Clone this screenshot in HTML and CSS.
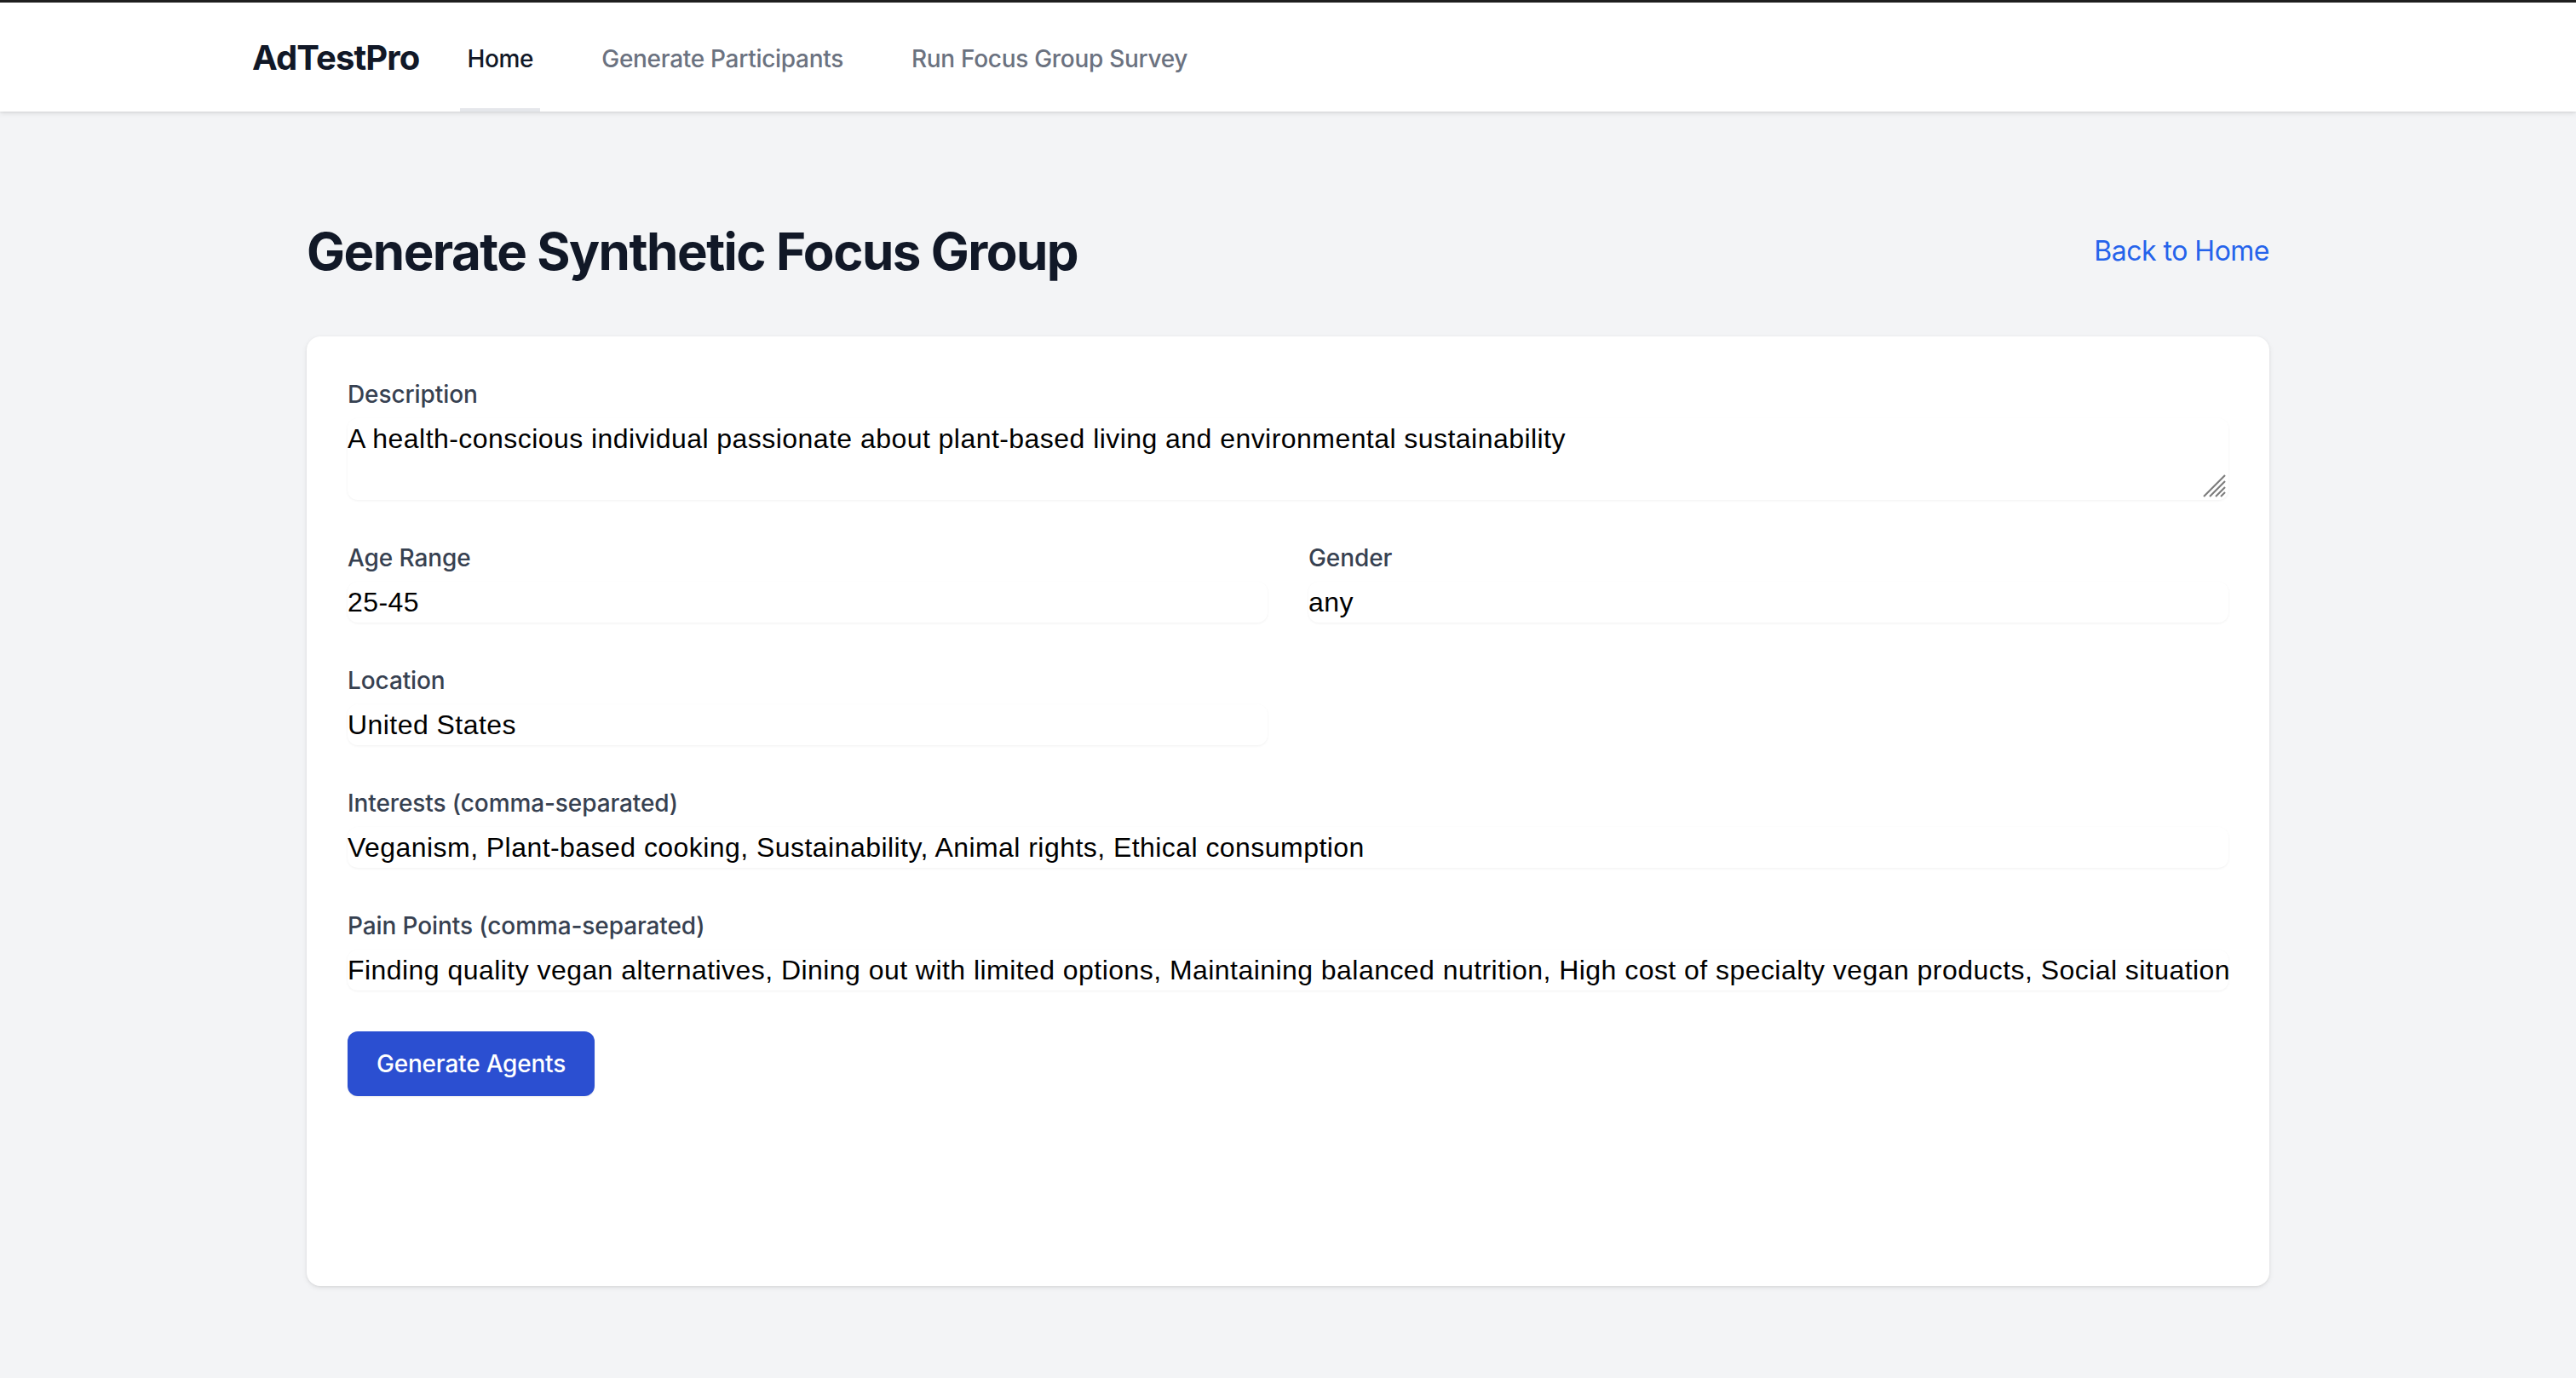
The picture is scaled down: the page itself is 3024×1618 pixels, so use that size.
FILE: index.html
```html
<!DOCTYPE html>
<html lang="en">
<head>
<meta charset="utf-8">
<title>AdTestPro - Generate Synthetic Focus Group</title>
<link rel="stylesheet" href="styles.css">
</head>
<body>
<nav class="topnav">
  <div class="topnav-inner">
    <div class="brand">AdTestPro</div>
    <div class="nav-links">
      <a class="nav-link active" href="#">Home</a>
      <a class="nav-link" href="#">Generate Participants</a>
      <a class="nav-link" href="#">Run Focus Group Survey</a>
    </div>
  </div>
</nav>
<main class="main">
  <div class="page-head">
    <h1 class="page-title">Generate Synthetic Focus Group</h1>
    <a class="back-link" href="#">Back to Home</a>
  </div>
  <div class="card">
    <form class="form">
      <div class="field">
        <label class="label">Description</label>
        <div class="textarea-wrap">
          <textarea class="control textarea" rows="2">A health-conscious individual passionate about plant-based living and environmental sustainability</textarea>
          <svg class="grip" width="28" height="28" viewBox="0 0 28 28" aria-hidden="true">
            <g stroke="#7c7c7c" stroke-width="2.2" stroke-linecap="butt">
              <line x1="1" y1="26" x2="26" y2="1"/>
              <line x1="8" y1="26" x2="26" y2="8"/>
              <line x1="15" y1="26" x2="26" y2="15"/>
              <line x1="21" y1="26" x2="26" y2="21"/>
            </g>
          </svg>
        </div>
      </div>
      <div class="grid2">
        <div class="field">
          <label class="label">Age Range</label>
          <input class="control" type="text" value="25-45">
        </div>
        <div class="field">
          <label class="label">Gender</label>
          <input class="control" type="text" value="any">
        </div>
        <div class="field">
          <label class="label">Location</label>
          <input class="control" type="text" value="United States">
        </div>
      </div>
      <div class="field">
        <label class="label">Interests (comma-separated)</label>
        <input class="control" type="text" value="Veganism, Plant-based cooking, Sustainability, Animal rights, Ethical consumption">
      </div>
      <div class="field">
        <label class="label">Pain Points (comma-separated)</label>
        <input class="control" type="text" value="Finding quality vegan alternatives, Dining out with limited options, Maintaining balanced nutrition, High cost of specialty vegan products, Social situations">
      </div>
      <div>
        <button class="btn" type="button">Generate Agents</button>
      </div>
    </form>
  </div>
</main>
</body>
</html>
```
FILE: styles.css
```css
* { box-sizing: border-box; }
html, body { margin: 0; padding: 0; }
body {
  background: #f3f4f6;
  font-family: Inter, "Noto Sans", "Liberation Sans", sans-serif;
  color: #111827;
  min-height: 1618px;
}
.topnav {
  background: #ffffff;
  border-top: 3px solid #1f1f1f;
  box-shadow: 0 2px 6px rgba(0,0,0,0.10), 0 1px 2px rgba(0,0,0,0.06);
}
.topnav-inner {
  max-width: 2560px;
  margin: 0 auto;
  padding: 0 64px;
  height: 128px;
  display: flex;
}
.brand {
  display: flex;
  align-items: center;
  font-size: 40px;
  font-weight: 700;
  color: #111827;
  letter-spacing: -0.9px;
}
.nav-links {
  margin-left: 48px;
  display: flex;
  gap: 64px;
}
.nav-link {
  display: inline-flex;
  align-items: center;
  padding: 8px 8px 0;
  border-bottom: 4px solid transparent;
  font-size: 28px;
  font-weight: 500;
  color: #6b7280;
  text-decoration: none;
  letter-spacing: -0.3px;
}
.nav-link.active {
  color: #111827;
  border-bottom-color: #e5e7eb;
}
.main {
  max-width: 2304px;
  margin: 0 auto;
  padding-top: 128px;
}
.page-head {
  display: flex;
  align-items: center;
  justify-content: space-between;
  margin-bottom: 64px;
}
.page-title {
  margin: 0;
  font-size: 60px;
  line-height: 72px;
  font-weight: 700;
  color: #111827;
  letter-spacing: -1.5px;
}
.back-link {
  font-size: 32px;
  line-height: 48px;
  color: #2563eb;
  text-decoration: none;
  letter-spacing: -0.5px;
}
.card {
  background: #ffffff;
  border-radius: 16px;
  padding: 48px;
  min-height: 1115px;
  box-shadow: 0 2px 6px rgba(0,0,0,0.08), 0 1px 3px rgba(0,0,0,0.06);
}
.form {
  display: flex;
  flex-direction: column;
  gap: 48px;
}
.grid2 {
  display: grid;
  grid-template-columns: 1fr 1fr;
  gap: 48px;
}
.field {
  display: flex;
  flex-direction: column;
}
.label {
  font-size: 28px;
  line-height: 40px;
  font-weight: 500;
  color: #374151;
  margin-bottom: 8px;
  letter-spacing: -0.1px;
}
.control {
  display: block;
  width: 100%;
  border: 0;
  padding: 0;
  margin: 0;
  font-family: "Liberation Sans", Arial, sans-serif;
  font-size: 32px;
  line-height: 48px;
  height: 48px;
  letter-spacing: 0.45px;
  color: #000000;
  background: #ffffff;
  border-radius: 12px;
  box-shadow: 0 1px 3px rgba(0,0,0,0.06);
  outline: none;
}
.textarea-wrap {
  position: relative;
}
.textarea {
  height: 96px;
  resize: none;
}
.grip {
  position: absolute;
  right: 2px;
  bottom: 2px;
}
.btn {
  display: inline-flex;
  align-items: center;
  border: 2px solid transparent;
  padding: 16px 32px;
  font-family: Inter, "Noto Sans", sans-serif;
  font-size: 28px;
  line-height: 40px;
  font-weight: 500;
  color: #ffffff;
  background: #2b4fd1;
  border-radius: 12px;
  box-shadow: 0 1px 2px rgba(0,0,0,0.08);
  cursor: pointer;
  letter-spacing: -0.2px;
}
```
